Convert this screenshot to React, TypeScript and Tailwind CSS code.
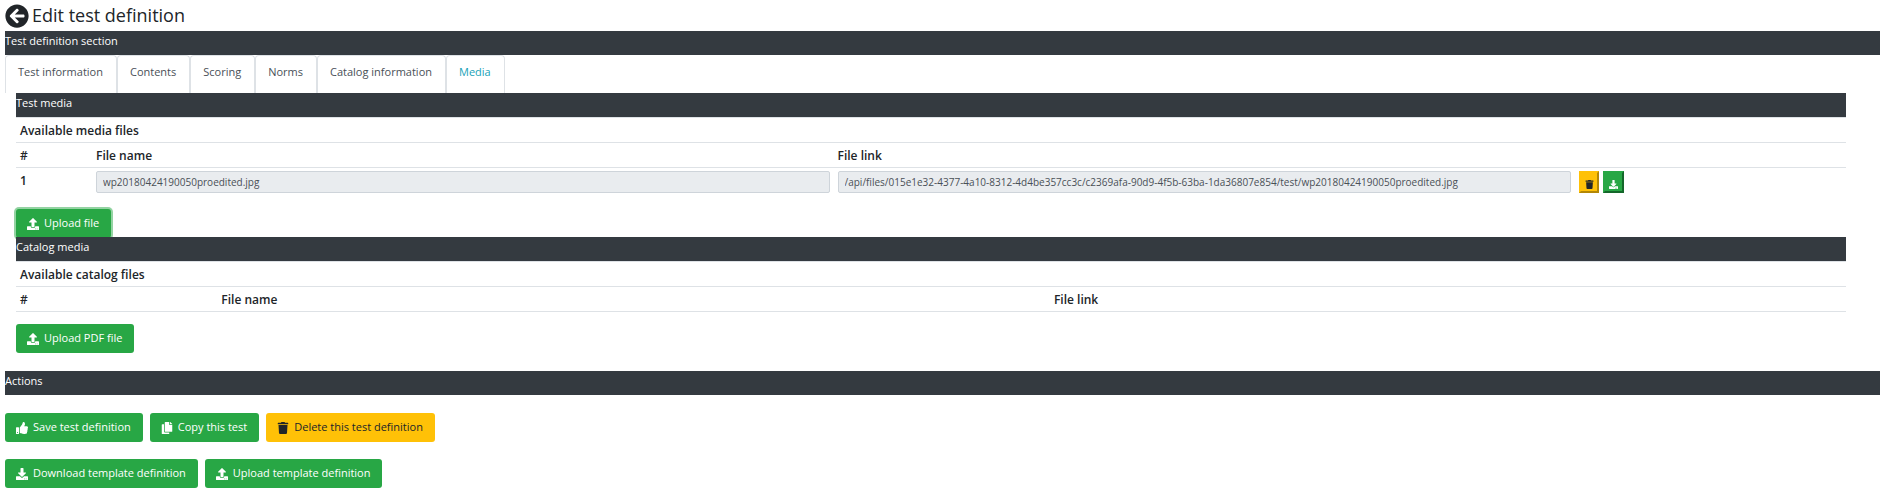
import type { ButtonHTMLAttributes, ReactNode } from "react";
import { FaArrowCircleLeft, FaCopy, FaDownload, FaThumbsUp, FaTrash, FaUpload } from "react-icons/fa";

function Bar({ children }: { children: ReactNode }) {
  return <h2 className="h-6 bg-[#343a40] leading-5 text-white">{children}</h2>;
}

type ButtonProps = ButtonHTMLAttributes<HTMLButtonElement> & { icon: ReactNode; tone?: "green" | "amber" };

function Button({ icon, tone = "green", className = "", children, ...rest }: ButtonProps) {
  const colour = tone === "green" ? "bg-[#28a745] text-white" : "bg-[#ffc107] text-[#212529]";
  return (
    <button type="button" className={`flex h-[29px] items-center gap-[5px] rounded-[3px] pr-3 pl-[11px] whitespace-nowrap [&>svg]:size-3 ${colour} ${className}`} {...rest}>
      {icon}
      {children}
    </button>
  );
}

const tabs = ["Test information", "Contents", "Scoring", "Norms", "Catalog information", "Media"];

const files = [
  {
    name: "wp20180424190050proedited.jpg",
    link: "/api/files/015e1e32-4377-4a10-8312-4d4be357cc3c/c2369afa-90d9-4f5b-63ba-1da36807e854/test/wp20180424190050proedited.jpg",
  },
];

const cell = "h-[25px] border-t border-[#dee2e6] px-1 pt-px text-left text-[12px] font-semibold";
const fieldCell = "border-t border-[#dee2e6] px-1 pt-[3px] align-top";
const field = "block h-[22px] w-full rounded-[2px] border border-[#ced4da] bg-[#e9ecef] px-[6px] text-[10px] text-[#495057]";

export default function App() {
  return (
    <main className="bg-white pr-[9px] pl-[5px] font-['Open_Sans','Noto_Sans',sans-serif] text-[11px] text-[#212529]">
      <header className="flex h-[31px] items-center gap-[3px]">
        <button type="button" aria-label="Back">
          <FaArrowCircleLeft className="size-6" />
        </button>
        <h1 className="pb-[2px] text-[18px] leading-7">Edit test definition</h1>
      </header>

      <Bar>Test definition section</Bar>
      <nav className="flex h-[38px]" role="tablist">
        {tabs.map((tab) => (
          <button
            key={tab}
            type="button"
            role="tab"
            aria-selected={tab === "Media"}
            className={`flex items-start rounded-t-[4px] border border-b-0 border-[#dee2e6] pt-2 pr-[13px] pl-3 whitespace-nowrap ${
              tab === "Media" ? "text-[#17a2b8]" : "text-[#495057]"
            }`}
          >
            {tab}
          </button>
        ))}
      </nav>

      <div className="mr-[34px] ml-[11px]">
        <section>
          <Bar>Test media</Bar>
          <table className="w-full table-fixed border-separate border-spacing-0">
            <colgroup>
              <col className="w-[76px]" />
              <col className="w-[40.52%]" />
              <col className="w-[40.52%]" />
              <col />
            </colgroup>
            <thead>
              <tr>
                <th colSpan={4} className={cell}>Available media files</th>
              </tr>
              <tr>
                <th className={cell}>#</th>
                <th className={cell}>File name</th>
                <th className={cell}>File link</th>
                <th className={cell} aria-label="File actions" />
              </tr>
            </thead>
            <tbody>
              {files.map((file, i) => (
                <tr key={file.name}>
                  <th scope="row" className={cell}>{i + 1}</th>
                  <td className={fieldCell}>
                    <input aria-label="File name" readOnly value={file.name} className={field} />
                  </td>
                  <td className={fieldCell}>
                    <input aria-label="File link" readOnly value={file.link} className={field} />
                  </td>
                  <td className={fieldCell}>
                    <div className="flex gap-1">
                      <button type="button" aria-label="Delete file" className="flex h-[22px] w-5 items-center justify-center border-2 border-[#ffc107] border-r-[#b38705] border-b-[#b38705] bg-[#ffc107] pt-1">
                        <FaTrash className="size-[9px]" />
                      </button>
                      <button type="button" aria-label="Download file" className="flex h-[22px] w-[21px] items-center justify-center border-2 border-[#28a745] border-r-[#14672a] border-b-[#14672a] bg-[#28a745] pt-1 text-white">
                        <FaDownload className="size-[9px]" />
                      </button>
                    </div>
                  </td>
                </tr>
              ))}
            </tbody>
          </table>
          <div className="h-11 pt-4">
            <Button icon={<FaUpload />} className="ring-2 ring-[#28a745]/50">Upload file</Button>
          </div>
        </section>

        <section className="relative">
          <Bar>Catalog media</Bar>
          <table className="w-full table-fixed border-separate border-spacing-0 border-b border-[#dee2e6]">
            <colgroup>
              <col className="w-[11%]" />
              <col className="w-[45.5%]" />
              <col />
            </colgroup>
            <thead>
              <tr>
                <th colSpan={3} className={cell}>Available catalog files</th>
              </tr>
              <tr>
                <th className={cell}>#</th>
                <th className={cell}>File name</th>
                <th className={cell}>File link</th>
              </tr>
            </thead>
          </table>
          <div className="pt-3 pb-[18px]">
            <Button icon={<FaUpload />}>Upload PDF file</Button>
          </div>
        </section>
      </div>

      <section>
        <Bar>Actions</Bar>
        <div className="flex flex-col gap-[17px] py-[18px]">
          <div className="flex gap-[7px]">
            <Button icon={<FaThumbsUp />}>Save test definition</Button>
            <Button icon={<FaCopy />}>Copy this test</Button>
            <Button icon={<FaTrash />} tone="amber">Delete this test definition</Button>
          </div>
          <div className="flex gap-[7px]">
            <Button icon={<FaDownload />}>Download template definition</Button>
            <Button icon={<FaUpload />}>Upload template definition</Button>
          </div>
        </div>
      </section>
    </main>
  );
}
